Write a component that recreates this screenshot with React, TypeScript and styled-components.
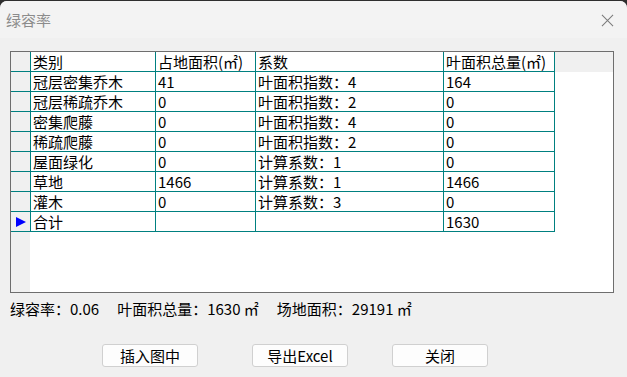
import React from "react";
import styled, {createGlobalStyle} from "styled-components";

type Row = {
	kind: string;
	area: string;
	factor: string;
	leaf: string;
	current?: boolean;
};

const rows: Row[] = [
	{kind: "冠层密集乔木", area: "41", factor: "叶面积指数：4", leaf: "164"},
	{kind: "冠层稀疏乔木", area: "0", factor: "叶面积指数：2", leaf: "0"},
	{kind: "密集爬藤", area: "0", factor: "叶面积指数：4", leaf: "0"},
	{kind: "稀疏爬藤", area: "0", factor: "叶面积指数：2", leaf: "0"},
	{kind: "屋面绿化", area: "0", factor: "计算系数：1", leaf: "0"},
	{kind: "草地", area: "1466", factor: "计算系数：1", leaf: "1466"},
	{kind: "灌木", area: "0", factor: "计算系数：3", leaf: "0"},
	{kind: "合计", area: "", factor: "", leaf: "1630", current: true},
];

const gridLine = "#008080";
const font = `"Noto Sans CJK SC", "Noto Sans", sans-serif`;

const GlobalStyle = createGlobalStyle`
  html, body {
	margin: 0;
	padding: 0;
	background: #2e2e2e;
  }
  body {
	font-family: ${font};
  }
`;

export default function App() {
	return (
		<>
			<GlobalStyle/>
			<Window>
				<TitleBar>
					<Title>绿容率</Title>
					<CloseIcon viewBox="0 0 14 14" aria-label="关闭">
						<path d="M1 1 L13 13 M13 1 L1 13"/>
					</CloseIcon>
				</TitleBar>
				<Body>
					<GridFrame>
						<Table>
							<colgroup>
								<col style={{width: 20}}/>
								<col style={{width: 125}}/>
								<col style={{width: 100}}/>
								<col style={{width: 188}}/>
								<col style={{width: 111}}/>
								<col/>
							</colgroup>
							<thead>
								<tr>
									<RowHead/>
									<Cell>类别</Cell>
									<Cell>占地面积(㎡)</Cell>
									<Cell>系数</Cell>
									<Cell>叶面积总量(㎡)</Cell>
									<Filler header/>
								</tr>
							</thead>
							<tbody>
								{rows.map((row, idx) => (
									<tr key={idx}>
										<RowHead>{row.current && <CurrentMark/>}</RowHead>
										<Cell>{row.kind}</Cell>
										<Cell>{row.area}</Cell>
										<Cell>{row.factor}</Cell>
										<Cell>{row.leaf}</Cell>
										<Filler/>
									</tr>
								))}
							</tbody>
						</Table>
					</GridFrame>
					<Summary>
						<SummaryItem>绿容率：0.06</SummaryItem>
						<SummaryItem>叶面积总量：1630 ㎡</SummaryItem>
						<SummaryItem>场地面积：29191 ㎡</SummaryItem>
					</Summary>
					<ButtonRow>
						<Button>插入图中</Button>
						<Button gap={54}>导出Excel</Button>
						<Button gap={44}>关闭</Button>
					</ButtonRow>
				</Body>
			</Window>
		</>
	);
}

const Window = styled.div`
  display: flex;
  flex-direction: column;
  width: 627px;
  height: 376px;
  margin-top: 1px;
  background: #f0f0f0;
  border-radius: 7px 7px 0 0;
  overflow: hidden;
`;

const TitleBar = styled.div`
  display: flex;
  align-items: center;
  justify-content: space-between;
  height: 37px;
  padding: 0 13px 0 6px;
  background: #f3f3f3;
`;

const Title = styled.span`
  font-size: 15px;
  color: #8c8c8c;
  margin-top: -1px;
`;

const CloseIcon = styled.svg`
  width: 13px;
  height: 13px;
  stroke: #7a7a7a;
  stroke-width: 1.1;
  fill: none;
  margin-top: 2px;
`;

const Body = styled.div`
  display: flex;
  flex-direction: column;
  padding: 13px 13px 0 10px;
`;

const GridFrame = styled.div`
  height: 242px;
  box-sizing: border-box;
  border: 1px solid #6e6e6e;
  background: linear-gradient(to right, #f0f0f0 0 19px, #ffffff 19px);
`;

const Table = styled.table`
  width: 100%;
  table-layout: fixed;
  border-collapse: separate;
  border-spacing: 0;
  font-size: 15px;
  color: #000;
`;

const Cell = styled.td`
  height: 19px;
  padding: 0 2px;
  line-height: 19px;
  white-space: nowrap;
  overflow: hidden;
  background: #ffffff;
  border-right: 1px solid ${gridLine};
  border-bottom: 1px solid ${gridLine};
`;

const RowHead = styled.td`
  height: 19px;
  padding: 0;
  background: #f0f0f0;
  border-right: 1px solid ${gridLine};
  border-bottom: 1px solid ${gridLine};
  vertical-align: middle;
`;

const Filler = styled.td<{ header?: boolean }>`
  padding: 0;
  background: ${(p) => (p.header ? "#f0f0f0" : "#ffffff")};
`;

const CurrentMark = styled.span`
  display: block;
  width: 0;
  height: 0;
  margin-left: 5px;
  border-left: 10px solid #0000ff;
  border-top: 5px solid transparent;
  border-bottom: 5px solid transparent;
`;

const Summary = styled.div`
  display: flex;
  gap: 18px;
  margin-top: 6px;
  height: 20px;
  line-height: 20px;
  font-size: 15px;
  color: #000;
`;

const SummaryItem = styled.span`
  white-space: pre;
`;

const ButtonRow = styled.div`
  display: flex;
  margin-top: 25px;
  padding-left: 92px;
`;

const Button = styled.button<{ gap?: number }>`
  width: 96px;
  height: 23px;
  margin-left: ${(p) => p.gap ?? 0}px;
  padding: 0;
  font-family: ${font};
  font-size: 15px;
  line-height: 21px;
  color: #000;
  background: #fdfdfd;
  border: 1px solid #d0d0d0;
  border-radius: 3px;
`;
